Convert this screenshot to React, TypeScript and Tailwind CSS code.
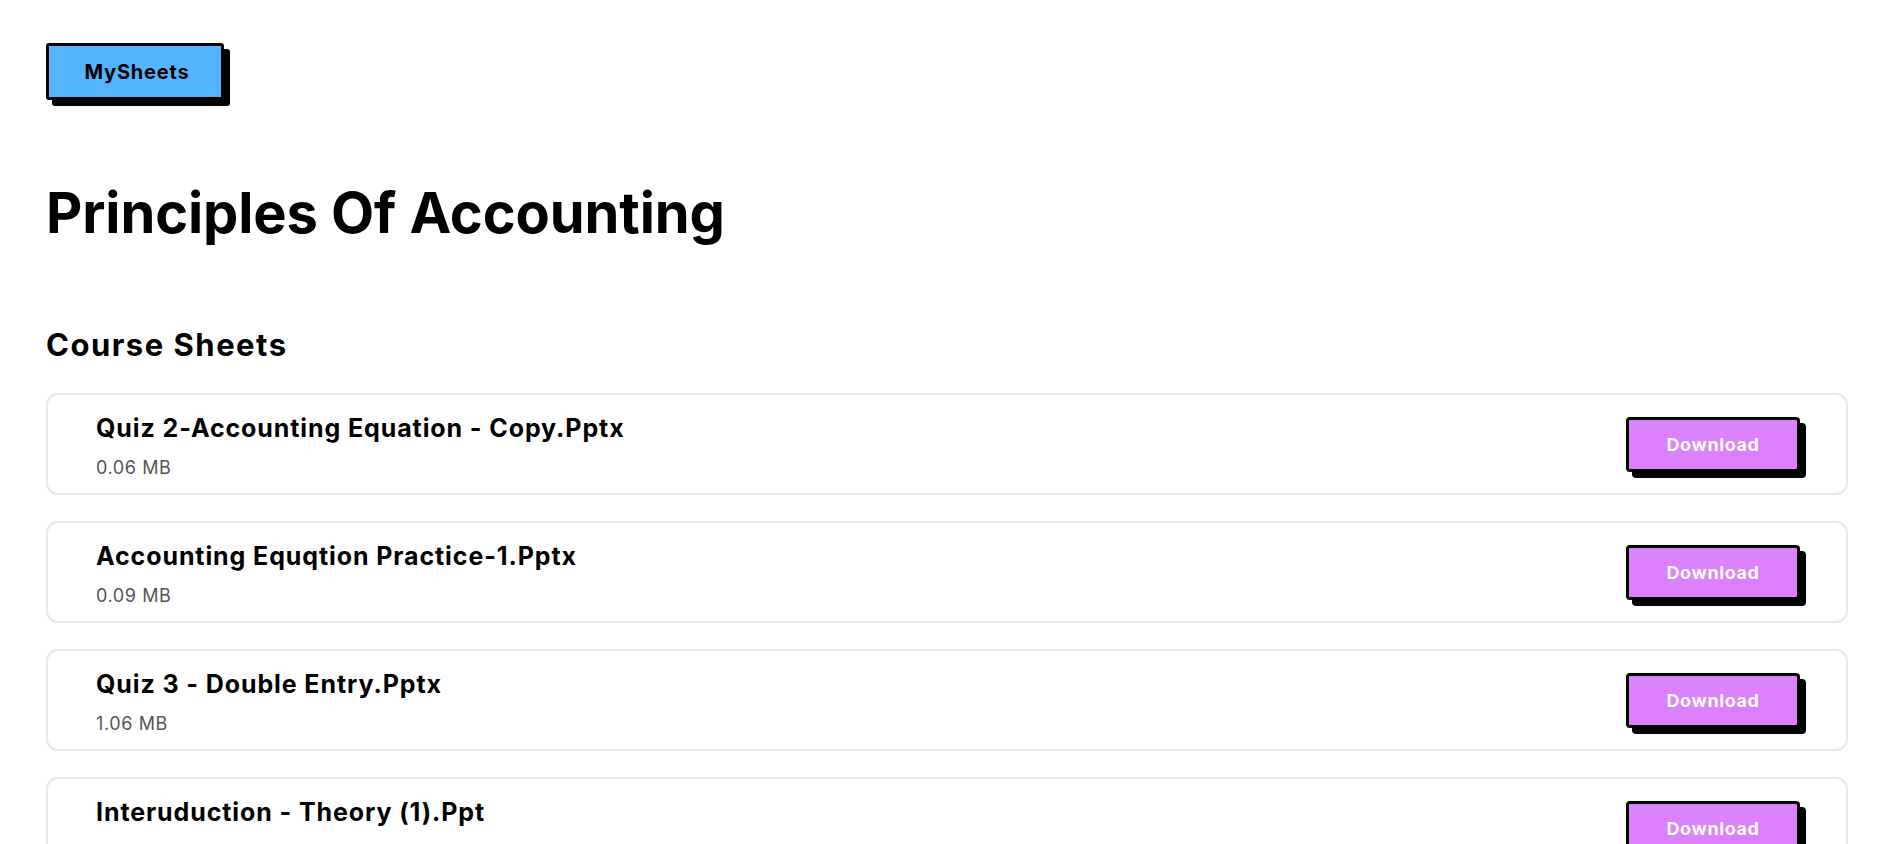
import React from "react";

interface Sheet {
  name: string;
  size: string;
}

const sheets: Sheet[] = [
  { name: "Quiz 2-Accounting Equation - Copy.Pptx", size: "0.06 MB" },
  { name: "Accounting Equqtion Practice-1.Pptx", size: "0.09 MB" },
  { name: "Quiz 3 - Double Entry.Pptx", size: "1.06 MB" },
  { name: "Interuduction - Theory (1).Ppt", size: "2.41 MB" },
];

function SheetCard({ sheet }: { sheet: Sheet }) {
  return (
    <div className="h-[102px] flex items-center justify-between border-2 border-[#e8e8e8] rounded-[12px] pl-[48px] pr-[46px] bg-white">
      <div className="pt-[3px]">
        <div className="text-[25px] leading-9 font-bold text-black tracking-[0.9px] mb-2">{sheet.name}</div>
        <div className="text-[18px] leading-7 text-[#555555] tracking-[0.6px]">{sheet.size}</div>
      </div>
      <button className="w-[174px] h-[55px] bg-[#dd80fe] border-[3px] border-black rounded-[4px] shadow-[6px_6px_0_#000] text-white text-[18px] font-bold tracking-[0.6px]">
        Download
      </button>
    </div>
  );
}

export default function App() {
  return (
    <div
      className="min-h-screen bg-white text-black pl-[46px] pr-[40px] pt-[43px] pb-10"
      style={{ fontFamily: "Inter, 'Noto Sans', sans-serif" }}
    >
      {/* Brand */}
      <button className="w-[178px] h-[57px] bg-[#54b4ff] border-[3px] border-black rounded-[3px] shadow-[6px_6px_0_#000] text-[20px] font-bold text-black tracking-[0.8px] pl-[4px]">
        MySheets
      </button>

      <h1 className="mt-[85px] text-[56px] leading-none font-bold tracking-[-0.1px]">
        Principles Of Accounting
      </h1>

      <h2 className="mt-[88px] text-[31px] leading-none font-bold tracking-[1.5px]">Course Sheets</h2>

      {/* Sheet list */}
      <div className="mt-[33px] flex flex-col gap-[26px]">
        {sheets.map((s) => (
          <SheetCard key={s.name} sheet={s} />
        ))}
      </div>
    </div>
  );
}
